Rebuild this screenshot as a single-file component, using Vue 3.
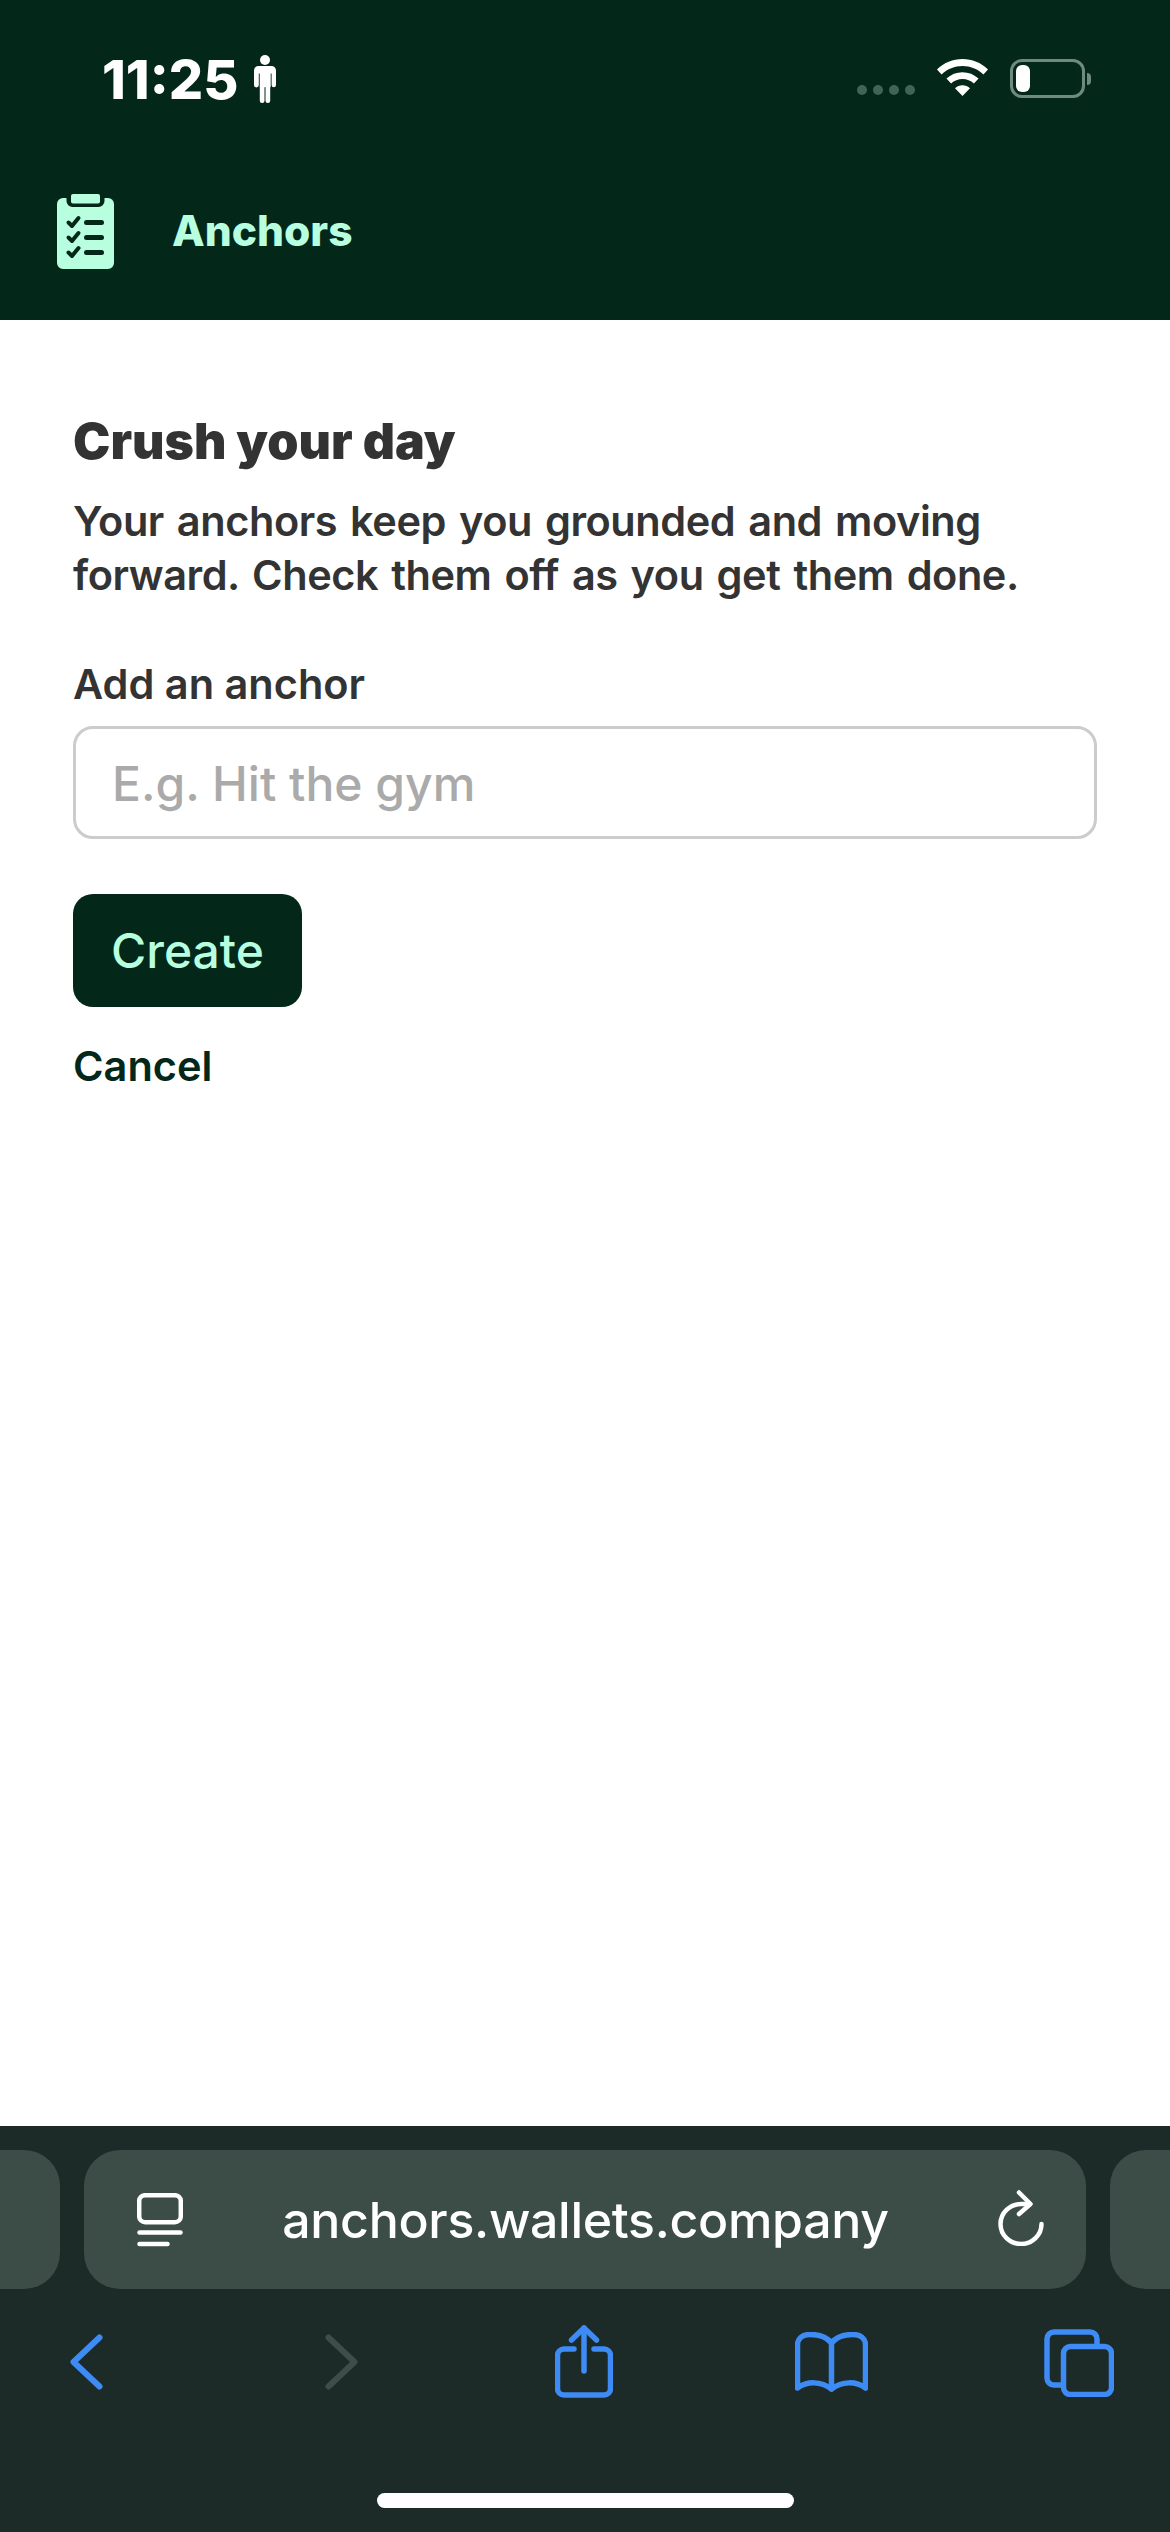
<script setup>
import { ref } from 'vue'

const anchor = ref('')
const checkRows = [0, 15, 30]
</script>

<template>
  <div class="phone">
    <header class="top">
      <div class="status">
        <div class="status-left">
          <span class="time">11:25</span>
          <svg class="person" viewBox="0 0 22 48" fill="#fff">
            <circle cx="11" cy="5" r="5" />
            <path d="M4.500 11h13a4.500 4.500 0 0 1 4.500 4.500V30a2.200 2.200 0 0 1-4.400 0V18.500h-.9V32h-11V18.500h-.9V30A2.200 2.200 0 0 1 0 30V15.500A4.500 4.500 0 0 1 4.500 11z" />
            <rect x="5.800" y="30" width="4.700" height="18" rx="2.200" />
            <rect x="11.500" y="30" width="4.700" height="18" rx="2.200" />
          </svg>
        </div>
        <div class="status-right">
          <div class="signal"><i></i><i></i><i></i><i></i></div>
          <svg class="wifi" viewBox="0 0 51 37" fill="#fff">
            <path d="M25.5 0C35 0 44 3.6 51 10.4l-4.6 5C40.6 9.8 33.3 6.9 25.5 6.9S10.4 9.8 4.6 15.400L0 10.400C7 3.600 16 0 25.500 0z" />
            <path d="M25.500 13.200c6 0 11.600 2.200 16.100 6.400l-4.700 5c-3.100-2.900-7.100-4.500-11.400-4.500s-8.300 1.600-11.400 4.500l-4.700-5c4.500-4.200 10.100-6.400 16.100-6.400z" />
            <path d="M25.500 26.300c2.800 0 5.500 1 7.500 2.900l-7.500 7.800-7.500-7.800c2-1.900 4.700-2.900 7.500-2.900z" />
          </svg>
          <div class="battery">
            <div class="battery-shell"><div class="battery-level"></div></div>
            <div class="battery-nub"></div>
          </div>
        </div>
      </div>
      <div class="appbar">
        <svg class="logo" viewBox="0 0 57 75">
          <path fill="#b8ffe0" d="M6 4h3.500v3a6 6 0 0 0 6 6h26a6 6 0 0 0 6-6V4H51a6 6 0 0 1 6 6v59a6 6 0 0 1-6 6H6a6 6 0 0 1-6-6V10a6 6 0 0 1 6-6z" />
          <rect fill="#b8ffe0" x="14" y="0" width="29" height="9.500" rx="2" />
          <g v-for="y in checkRows" :key="y">
            <path d="M11.500 28.500l3.500 3.500L21.500 24" :transform="`translate(0 ${y})`" fill="none" stroke="#03281a" stroke-width="4" stroke-linecap="round" stroke-linejoin="round" />
            <rect x="27" :y="26 + y" width="20" height="5" rx="2.500" fill="#03281a" />
          </g>
        </svg>
        <span class="brand">Anchors</span>
      </div>
    </header>

    <main class="content">
      <h1>Crush your day</h1>
      <p class="lead">Your anchors keep you grounded and moving forward. Check them off as you get them done.</p>
      <label class="field-label" for="anchor">Add an anchor</label>
      <input id="anchor" v-model="anchor" class="field" placeholder="E.g. Hit the gym" />
      <button class="create">Create</button>
      <a class="cancel">Cancel</a>
    </main>

    <footer class="safari">
      <div class="url-row">
        <div class="tab-peek left"></div>
        <div class="url-bar">
          <svg class="reader" viewBox="0 0 46 54" fill="none" stroke="#fff" stroke-width="4.500" stroke-linecap="round">
            <rect x="2.200" y="2.200" width="41.600" height="27" rx="6" />
            <path d="M2.500 39.500h41" />
            <path d="M2.500 51h28" />
          </svg>
          <span class="url">anchors.wallets.company</span>
          <svg class="reload" viewBox="0 0 46 56" fill="none" stroke="#fff" stroke-width="4.500" stroke-linecap="round" stroke-linejoin="round">
            <path d="M43.500 34a20.500 20 0 1 1-20.500-20h8" />
            <path d="M21 2.500l11.500 11.500L21 24" />
          </svg>
        </div>
        <div class="tab-peek right"></div>
      </div>
      <div class="tools">
        <svg class="tool back" viewBox="0 0 33 56" fill="none" stroke="#3e8bf5" stroke-width="6" stroke-linecap="round" stroke-linejoin="round">
          <path d="M29.500 3.500L3.500 28l26 24.500" />
        </svg>
        <svg class="tool forward" viewBox="0 0 33 56" fill="none" stroke="#3f4d49" stroke-width="6" stroke-linecap="round" stroke-linejoin="round">
          <path d="M3.500 3.500L29.500 28l-26 24.500" />
        </svg>
        <svg class="tool share" viewBox="0 0 58 73" fill="none" stroke="#3e8bf5" stroke-width="5.500" stroke-linecap="round" stroke-linejoin="round">
          <path d="M19 24H9a6.500 6.500 0 0 0-6.500 6.500v33A6.500 6.500 0 0 0 9 70h40a6.500 6.500 0 0 0 6.500-6.500v-33A6.500 6.500 0 0 0 49 24H39" />
          <path d="M29 46V3" />
          <path d="M16.500 15L29 3l12.500 12" />
        </svg>
        <svg class="tool book" viewBox="0 0 73 60" fill="none" stroke="#3e8bf5" stroke-width="5.500" stroke-linecap="round" stroke-linejoin="round">
          <path d="M36.500 11C31 4 24 2.500 15 2.500 8 2.500 2.500 6 2.500 13v43C12 49 26 49 36.500 57 47 49 61 49 70.500 56V13c0-7-5.500-10.500-12.500-10.500-9 0-16 1.500-21.500 8.500z" />
          <path d="M36.500 11v46" />
        </svg>
        <svg class="tool tabs" viewBox="0 0 70 68" fill="none" stroke="#3e8bf5" stroke-width="5.500" stroke-linejoin="round">
          <path d="M17 56h-7a7 7 0 0 1-7-7V10a7 7 0 0 1 7-7h36a7 7 0 0 1 7 7v7" />
          <rect x="19.500" y="17.500" width="48" height="48" rx="7" />
        </svg>
      </div>
      <div class="home-indicator"></div>
    </footer>
  </div>
</template>

<style scoped>
.phone {
  width: 1170px;
  height: 2532px;
  display: flex;
  flex-direction: column;
  background: #fff;
  font-family: Inter, "Liberation Sans", sans-serif;
  overflow: hidden;
}

.top {
  height: 320px;
  background: #03281a;
}

.status {
  display: flex;
  justify-content: space-between;
  align-items: flex-start;
  padding: 55px 79px 0 102px;
  height: 110px;
  box-sizing: border-box;
}

.status-left {
  display: flex;
  align-items: flex-start;
  gap: 16px;
}

.time {
  color: #fff;
  font-size: 54px;
  font-weight: 800;
  line-height: 48px;
  padding-top: 1px;
}

.person {
  width: 22px;
  height: 48px;
}

.status-right {
  display: flex;
  align-items: flex-start;
  padding-top: 4px;
}

.signal {
  display: flex;
  gap: 6px;
  margin-top: 26px;
}

.signal i {
  width: 10px;
  height: 10px;
  border-radius: 50%;
  background: #3f6556;
}

.wifi {
  width: 51px;
  height: 37px;
  margin-left: 22px;
}

.battery {
  display: flex;
  align-items: center;
  margin-left: 22px;
}

.battery-shell {
  width: 75px;
  height: 39px;
  box-sizing: border-box;
  border: 3px solid #6f8a7f;
  border-radius: 12px;
  padding: 3px;
}

.battery-level {
  width: 14px;
  height: 100%;
  background: #fff;
  border-radius: 6px;
}

.battery-nub {
  width: 4px;
  height: 12px;
  margin-left: 2px;
  background: #6f8a7f;
  border-radius: 0 6px 6px 0;
}

.appbar {
  display: flex;
  align-items: center;
  padding: 84px 0 0 57px;
  gap: 58px;
}

.logo {
  width: 57px;
  height: 75px;
}

.brand {
  padding-bottom: 3px;
  color: #b8ffe0;
  font-size: 42.500px;
  font-weight: 800;
}

.content {
  flex: 1;
  display: flex;
  flex-direction: column;
  align-items: flex-start;
  padding: 92px 73px 0;
  color: #333;
}

h1 {
  margin: 0;
  font-size: 50px;
  font-weight: 900;
  line-height: 58px;
}

.lead {
  margin: 24px 0 0;
  font-size: 41.500px;
  font-weight: 600;
  line-height: 54px;
  word-spacing: 3px;
  letter-spacing: -0.450px;
}

.field-label {
  margin-top: 55px;
  font-size: 41.500px;
  font-weight: 600;
  line-height: 54px;
}

.field {
  width: 100%;
  height: 113px;
  margin-top: 15px;
  padding: 2px 36px 0;
  box-sizing: border-box;
  border: 3px solid #ccc;
  border-radius: 20px;
  background: #fff;
  font-family: inherit;
  font-size: 48px;
  font-weight: 500;
  color: #333;
  outline: none;
}

.field::placeholder {
  color: #aaa;
  opacity: 1;
}

.create {
  width: 229px;
  height: 113px;
  margin-top: 55px;
  border: none;
  border-radius: 20px;
  background: #03281a;
  color: #b8ffe0;
  font-family: inherit;
  font-size: 48px;
  font-weight: 500;
}

.cancel {
  margin-top: 32px;
  color: #03281a;
  font-size: 41.500px;
  font-weight: 600;
  line-height: 54px;
}

.safari {
  height: 406px;
  background: #1c2b27;
  position: relative;
}

.url-row {
  display: flex;
  gap: 24px;
  padding-top: 24px;
  margin-left: -60px;
  width: 1330px;
}

.tab-peek {
  width: 120px;
  height: 139px;
  background: #3c4d48;
  border-radius: 36px;
}

.url-bar {
  width: 1002px;
  height: 139px;
  flex: none;
  display: flex;
  align-items: center;
  box-sizing: border-box;
  padding: 0 42px 0 53px;
  background: #3c4d48;
  border-radius: 36px;
}

.reader {
  width: 46px;
  height: 54px;
  flex: none;
}

.url {
  flex: 1;
  margin-right: 10px;
  text-align: center;
  color: #fff;
  font-size: 50px;
  font-weight: 500;
  letter-spacing: -0.300px;
}

.reload {
  width: 46px;
  height: 56px;
  flex: none;
  margin-top: -4px;
}

.tools {
  height: 0;
}

.tool {
  position: absolute;
}

.back {
  left: 70px;
  top: 208px;
  width: 33px;
  height: 56px;
}

.forward {
  left: 325px;
  top: 208px;
  width: 33px;
  height: 56px;
}

.share {
  left: 555px;
  top: 199px;
  width: 58px;
  height: 73px;
}

.book {
  left: 795px;
  top: 206px;
  width: 73px;
  height: 60px;
}

.tabs {
  left: 1044px;
  top: 203px;
  width: 70px;
  height: 68px;
}

.home-indicator {
  position: absolute;
  left: 377px;
  top: 367px;
  width: 417px;
  height: 15px;
  background: #fff;
  border-radius: 8px;
}
</style>
